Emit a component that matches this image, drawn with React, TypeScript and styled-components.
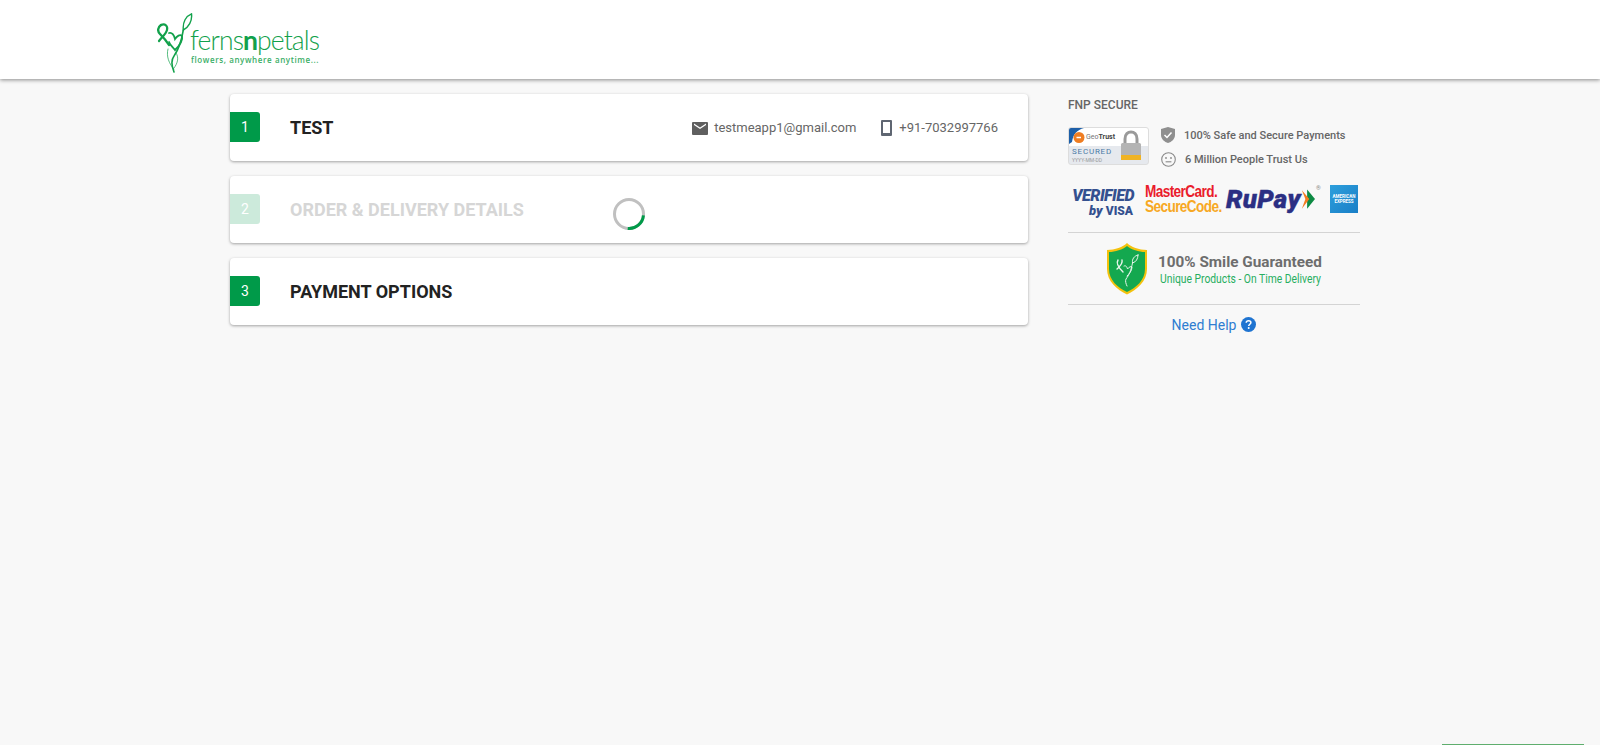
import React from "react";
import styled, { createGlobalStyle } from "styled-components";

const Global = createGlobalStyle`
  html, body { margin: 0; padding: 0; background: #f8f8f8; height: 100%; overflow: hidden; }
  body { font-family: Roboto, "Liberation Sans", sans-serif; }
  #root { height: 100%; }
`;

const Page = styled.div`
  position: relative;
  height: 745px;
  background: #f8f8f8;
  overflow: hidden;
`;
const Header = styled.header`
  height: 79px;
  background: #fff;
  box-shadow: 0 1px 4px rgba(0, 0, 0, 0.45);
  display: flex;
  align-items: flex-start;
  padding: 13px 0 0 157px;
  box-sizing: border-box;
`;
const Logo = styled.div`
  display: flex;
  align-items: flex-start;
`;
const LogoWords = styled.div`
  margin-left: -3px;
  padding-top: 14px;
  display: flex;
  flex-direction: column;
  color: #12a14b;
`;
const Wordmark = styled.div`
  font-family: Lato, sans-serif;
  font-weight: 300;
  font-size: 26.5px;
  line-height: 26px;
  letter-spacing: -0.9px;
  white-space: nowrap;
  b { font-weight: 700; }
`;
const Tagline = styled.div`
  font-family: "Open Sans", sans-serif;
  font-weight: 600;
  font-size: 8px;
  line-height: 9px;
  margin-top: 2px;
  margin-left: 1px;
  letter-spacing: 0.6px;
  white-space: nowrap;
  opacity: 0.85;
`;
const Main = styled.main`
  display: flex;
  align-items: flex-start;
  padding: 15px 0 0 230px;
`;
const Steps = styled.section`
  width: 798px;
  display: flex;
  flex-direction: column;
  gap: 15px;
`;
const Card = styled.div`
  position: relative;
  height: 67px;
  background: #fff;
  border-radius: 4px;
  box-shadow: 0 1px 3px rgba(0, 0, 0, 0.35);
  display: flex;
  align-items: flex-start;
  padding: 18px 30px 0 0;
  box-sizing: border-box;
`;
const Badge = styled.div<{ $faded?: boolean }>`
  width: 30px;
  height: 30px;
  flex: none;
  background: ${(p) => (p.$faded ? "#cceadb" : "#009a49")};
  border-radius: 0 3px 3px 0;
  color: #fff;
  font-size: 14px;
  font-weight: 400;
  display: flex;
  align-items: center;
  justify-content: center;
`;
const Title = styled.h2<{ $faded?: boolean }>`
  margin: 4px 0 0 30px;
  font-size: 18px;
  font-weight: 700;
  line-height: 24px;
  color: ${(p) => (p.$faded ? "#d6d6d6" : "#222222")};
`;
const Contact = styled.div`
  margin-left: auto;
  margin-top: 8px;
  display: flex;
  align-items: center;
  color: #666;
  font-size: 13px;
  line-height: 16px;
`;
const ContactItem = styled.span<{ $gap: number }>`
  display: flex;
  align-items: center;
  gap: ${(p) => p.$gap}px;
  & + & { margin-left: 25px; }
`;
const SpinnerWrap = styled.div`
  position: absolute;
  left: 383px;
  top: 22px;
  width: 32px;
  height: 32px;
`;
const Side = styled.aside`
  width: 292px;
  margin-left: 40px;
  display: flex;
  flex-direction: column;
`;
const SideTitle = styled.h3`
  margin: 0;
  font-size: 12px;
  line-height: 14px;
  font-weight: 500;
  color: #666;
  padding-top: 4px;
`;
const TrustRow = styled.div`
  display: flex;
  margin-top: 15px;
`;
const GeoBadge = styled.div`
  width: 81px;
  height: 38px;
  box-sizing: border-box;
  border: 1px solid #ddd;
  border-radius: 3px;
  background: linear-gradient(#fff 0 50%, #e6e9ee 50% 100%);
  position: relative;
  overflow: hidden;
`;
const GeoName = styled.div`
  position: absolute;
  left: 17px;
  top: 5px;
  font-size: 7px;
  line-height: 8px;
  color: #777;
  b { color: #444; }
`;
const GeoSecured = styled.div`
  position: absolute;
  left: 3px;
  top: 19px;
  font-size: 8px;
  line-height: 9px;
  letter-spacing: 0.8px;
  color: #4b7aa6;
`;
const GeoDate = styled.div`
  position: absolute;
  left: 3px;
  top: 29px;
  font-size: 5px;
  line-height: 6px;
  color: #999;
`;
const GeoLockSlot = styled.svg`
  position: absolute;
  left: 50px;
  top: 2px;
`;
const GeoMark = styled.svg`
  position: absolute;
  left: 0;
  top: 0;
`;
const TrustList = styled.div`
  margin-left: 12px;
  display: flex;
  flex-direction: column;
  gap: 8px;
`;
const TrustItem = styled.div`
  display: flex;
  align-items: center;
  gap: 9px;
  height: 16px;
  font-size: 11px;
  font-weight: 500;
  color: #666;
  white-space: nowrap;
`;
const Brands = styled.div`
  display: flex;
  align-items: center;
  height: 36px;
  margin-top: 14px;
  padding-left: 4px;
`;
const Verified = styled.div`
  width: 62px;
  color: #34508f;
  font-family: Roboto, sans-serif;
  font-weight: 900;
  font-style: italic;
  text-align: right;
`;
const VerifiedTop = styled.div`
  font-size: 16px;
  line-height: 17px;
  margin-top: 6px;
  letter-spacing: -0.5px;
`;
const VerifiedBottom = styled.div`
  font-size: 13px;
  line-height: 13px;
  padding-right: 1px;
  span { font-size: 12px; font-style: normal; }
`;
const Master = styled.div`
  width: 73px;
  margin-left: 11px;
  font-family: "Liberation Sans", sans-serif;
  font-weight: 700;
  letter-spacing: -0.7px;
  transform: scaleX(0.85);
  transform-origin: left center;
  white-space: nowrap;
`;
const MasterTop = styled.div`
  color: #ea1c2c;
  font-size: 16px;
  line-height: 15px;
`;
const MasterBottom = styled.div`
  color: #f7a823;
  font-size: 16px;
  line-height: 15px;
`;
const RuPayWrap = styled.div`
  display: flex;
  align-items: center;
  margin-left: 8px;
  width: 104px;
  color: #2b2f83;
  position: relative;
`;
const RuPayText = styled.span`
  font-family: Roboto, sans-serif;
  font-size: 26px;
  line-height: 30px;
  font-weight: 900;
  font-style: italic;
  letter-spacing: 0.3px;
  -webkit-text-stroke: 0.4px #2b2f83;
`;
const Registered = styled.span`
  position: absolute;
  left: 90px;
  top: 0;
  font-size: 6px;
  line-height: 7px;
  color: #888;
`;
const Amex = styled.div`
  width: 28px;
  height: 28px;
  flex: none;
  background: linear-gradient(135deg, #2d9fdc, #1a7fc7);
  color: #fff;
  font-size: 4.5px;
  line-height: 5px;
  font-weight: 700;
  text-align: center;
  display: flex;
  flex-direction: column;
  justify-content: center;
`;
const Divider = styled.hr<{ $top?: number }>`
  width: 100%;
  margin: ${(p) => p.$top ?? 0}px 0 0;
  border: 0;
  border-top: 1px solid #d4d4d4;
`;
const Smile = styled.div`
  display: flex;
  align-items: center;
  height: 71px;
  padding-left: 38px;
`;
const SmileText = styled.div`
  margin-left: 10px;
  display: flex;
  flex-direction: column;
`;
const SmileTitle = styled.div`
  font-size: 15.3px;
  line-height: 20px;
  font-weight: 700;
  color: #6d6d6d;
  white-space: nowrap;
`;
const SmileSub = styled.div`
  font-size: 12px;
  line-height: 14px;
  color: #27ae60;
  white-space: nowrap;
  margin-left: 2px;
  transform: scaleX(0.86);
  transform-origin: left center;
`;
const Help = styled.div`
  display: flex;
  justify-content: center;
  align-items: center;
  gap: 5px;
  color: #2f7dd1;
  font-size: 14px;
  height: 39px;
`;
const BottomTab = styled.div`
  position: absolute;
  right: 16px;
  bottom: 0;
  width: 142px;
  height: 1px;
  background: #5fae6e;
`;

const PlantMark = () => (
  <svg width="36" height="60" viewBox="0 0 36 60" fill="none" stroke="#12a14b" strokeLinecap="round">
    <path d="M34.5 0.8C29 3 25.5 9 26.3 17C31.5 14.5 35.5 8 34.5 0.8Z" strokeWidth="1.4" />
    <path d="M26.3 17C24.5 28 22 36 17 43C14 47 15 54 17 59" strokeWidth="1.6" />
    <path d="M4 12C1 14 0 18 3 21C6 24 9 27 12 32" strokeWidth="2.4" />
    <path d="M4 12C8 10 11 13 10 17C9 21 5 24 2 28" strokeWidth="2.2" />
    <path d="M12 20C15 19 17 22 18 26C20 23 23 21 25 23C26 27 22 33 18 37C16 34 13 32 12 29" strokeWidth="1.8" />
    <path d="M11 36C9 43 12 51 17 56M19 40C22 44 21 50 17 55" strokeWidth="1" opacity=".7" />
  </svg>
);

const MailIcon = () => (
  <svg width="16" height="13" viewBox="0 0 16 13">
    <path fill="#5f5f5f" d="M1 0H15A1 1 0 0 1 16 1V12A1 1 0 0 1 15 13H1A1 1 0 0 1 0 12V1A1 1 0 0 1 1 0ZM2 3 8 7 14 3 14 1.6 8 5.4 2 1.6Z" fillRule="evenodd" />
  </svg>
);

const PhoneIcon = () => (
  <svg width="11" height="16" viewBox="0 0 11 16">
    <path fill="#5f6672" fillRule="evenodd" d="M1 0H10A1 1 0 0 1 11 1V15A1 1 0 0 1 10 16H1A1 1 0 0 1 0 15V1A1 1 0 0 1 1 0ZM2 2V13H9V2Z" />
  </svg>
);

const Spinner = () => (
  <svg width="32" height="32" viewBox="0 0 32 32" fill="none">
    <circle cx="16" cy="16" r="14.5" stroke="#c0c0c0" strokeWidth="3" />
    <path d="M30.5 16A14.5 14.5 0 0 1 16 30.5" stroke="#009a49" strokeWidth="3" transform="rotate(5 16 16)" />
  </svg>
);

const ShieldCheck = () => (
  <svg width="14" height="16" viewBox="0 0 14 16">
    <path fill="#8f8f8f" d="M7 0 14 2V8C14 12 10.5 15 7 16C3.5 15 0 12 0 8V2Z" />
    <path fill="none" stroke="#fff" strokeWidth="1.5" d="M3.5 8 6 10.5 10.5 5.5" />
  </svg>
);

const SmileIcon = () => (
  <svg width="15" height="15" viewBox="0 0 15 15" fill="none" stroke="#8a8a8a">
    <circle cx="7.5" cy="7.5" r="6.8" strokeWidth="1.1" />
    <circle cx="5" cy="6" r=".9" fill="#8a8a8a" stroke="none" />
    <circle cx="10" cy="6" r=".9" fill="#8a8a8a" stroke="none" />
    <path d="M4.6 9.8H10.4" strokeWidth="1.1" />
  </svg>
);

const RuPayArrow = () => (
  <svg width="14" height="22" viewBox="0 0 16 24">
    <path fill="#0d8a43" d="M7 1 16 12 7 23Z" />
    <path fill="#f47b20" d="M1 2 9.5 12 1 23 5 12Z" />
  </svg>
);

const SmileShield = () => (
  <svg width="42" height="52" viewBox="0 0 42 52">
    <path fill="#f4c20d" d="M21 0C25 4 33 7 41 7V26C41 38 31 47 21 51.5C11 47 1 38 1 26V7C9 7 17 4 21 0Z" />
    <path fill="#14a84f" d="M21 3C25 6.5 33 9 39 9V26C39 37 30 45 21 49C12 45 3 37 3 26V9C9 9 17 6.5 21 3Z" />
    <g fill="none" stroke="#e8f5ec" strokeLinecap="round">
      <path d="M32 12C28 13 26 16 26.500 20C30 19 32 16 32 12Z" strokeWidth="1" />
      <path d="M26.500 20C25 28 23 32 20 36C19 38 20 41 21 43" strokeWidth="1" />
      <path d="M12 17C10 20 12 24 17 29M16 17C17 21 13 24 11 26" strokeWidth="1.400" />
      <path d="M18 23C20 22 21 24 21.500 26C23 24 25 23 26 24C26 28 23 31 21 33" strokeWidth="1" />
    </g>
  </svg>
);

const HelpIcon = () => (
  <svg width="15" height="15" viewBox="0 0 15 15">
    <circle cx="7.5" cy="7.500" r="7.500" fill="#1f74d1" />
    <path d="M5.200 5.800C5.300 4.400 6.300 3.700 7.600 3.700C9 3.700 9.900 4.500 9.900 5.600C9.900 7.200 7.700 7.300 7.700 9" fill="none" stroke="#fff" strokeWidth="1.500" />
    <circle cx="7.700" cy="11" r="1" fill="#fff" />
  </svg>
);

export default function App() {
  return (
    <Page>
      <Global />
      <Header>
        <Logo>
          <PlantMark />
          <LogoWords>
            <Wordmark>
              ferns<b>n</b>petals
            </Wordmark>
            <Tagline>flowers, anywhere anytime...</Tagline>
          </LogoWords>
        </Logo>
      </Header>
      <Main>
        <Steps>
          <Card>
            <Badge>1</Badge>
            <Title>TEST</Title>
            <Contact>
              <ContactItem $gap={6}>
                <MailIcon />
                testmeapp1@gmail.com
              </ContactItem>
              <ContactItem $gap={7}>
                <PhoneIcon />
                +91-7032997766
              </ContactItem>
            </Contact>
          </Card>
          <Card>
            <Badge $faded>2</Badge>
            <Title $faded>ORDER &amp; DELIVERY DETAILS</Title>
            <SpinnerWrap>
              <Spinner />
            </SpinnerWrap>
          </Card>
          <Card>
            <Badge>3</Badge>
            <Title>PAYMENT OPTIONS</Title>
          </Card>
        </Steps>
        <Side>
          <SideTitle>FNP SECURE</SideTitle>
          <TrustRow>
            <GeoBadge>
              <GeoMark width="18" height="18" viewBox="0 0 18 18">
                <path fill="#1d5fa8" d="M0 0H15C8 2 4 6 3 14L0 16Z" />
                <circle cx="10" cy="9.500" r="5.500" fill="#ef7d22" />
                <path d="M7.500 9.500H12" stroke="#fff" strokeWidth="1.500" />
              </GeoMark>
              <GeoName>
                Geo<b>Trust</b>
              </GeoName>
              <GeoSecured>SECURED</GeoSecured>
              <GeoDate>YYYY-MM-DD</GeoDate>
              <GeoLockSlot width="24" height="32" viewBox="0 0 24 32" fill="none">
                <path d="M6 15V9C6 4 9 2 12 2C15 2 18 4 18 9V15" stroke="#9a9a9a" strokeWidth="3" />
                <rect x="2" y="13" width="20" height="17" rx="1.500" fill="#b4b4b4" />
                <rect x="2" y="25" width="20" height="5" fill="#f0b323" />
              </GeoLockSlot>
            </GeoBadge>
            <TrustList>
              <TrustItem>
                <ShieldCheck />
                100% Safe and Secure Payments
              </TrustItem>
              <TrustItem>
                <SmileIcon />
                6 Million People Trust Us
              </TrustItem>
            </TrustList>
          </TrustRow>
          <Brands>
            <Verified>
              <VerifiedTop>VERIFIED</VerifiedTop>
              <VerifiedBottom>
                by <span>VISA</span>
              </VerifiedBottom>
            </Verified>
            <Master>
              <MasterTop>MasterCard.</MasterTop>
              <MasterBottom>SecureCode.</MasterBottom>
            </Master>
            <RuPayWrap>
              <RuPayText>RuPay</RuPayText>
              <RuPayArrow />
              <Registered>®</Registered>
            </RuPayWrap>
            <Amex>
              <span>AMERICAN</span>
              <span>EXPRESS</span>
            </Amex>
          </Brands>
          <Divider $top={15} />
          <Smile>
            <SmileShield />
            <SmileText>
              <SmileTitle>100% Smile Guaranteed</SmileTitle>
              <SmileSub>Unique Products - On Time Delivery</SmileSub>
            </SmileText>
          </Smile>
          <Divider />
          <Help>
            Need Help
            <HelpIcon />
          </Help>
        </Side>
      </Main>
      <BottomTab />
    </Page>
  );
}
